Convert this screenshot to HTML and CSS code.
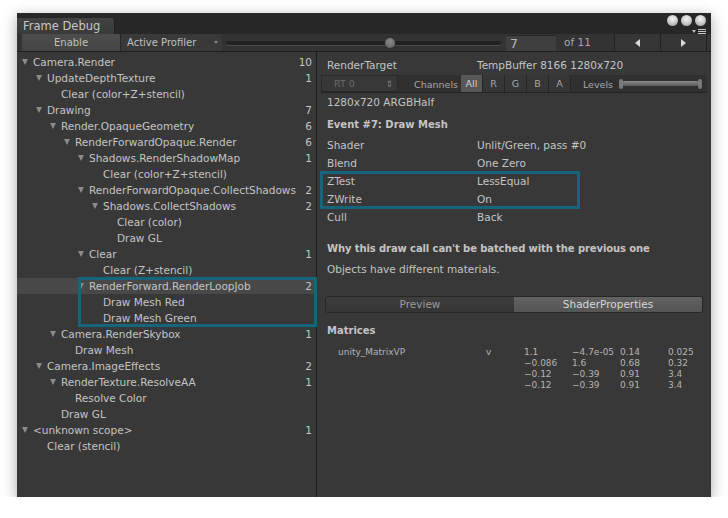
FILE: index.html
```html
<!DOCTYPE html>
<html>
<head>
<meta charset="utf-8">
<link rel="stylesheet" href="styles.css">
</head>
<body>
<div class="window">
  <div class="tabbar">
    <div class="tab">Frame Debug</div>
    <div class="winctrl">
      <div class="dots"><span class="dot"></span><span class="dot"></span><span class="dot"></span></div>
      <div class="menuicon"><span class="mtri"></span><span class="mlines"></span></div>
    </div>
  </div>
  <div class="toolbar">
    <div class="tbtn enable">Enable</div>
    <div class="tbtn profiler">Active Profiler<span class="caret"></span></div>
    <div class="tslider"><div class="track"><span class="thumb"></span></div></div>
    <div class="field">7</div>
    <div class="ofcount">of 11</div>
    <div class="navbtn"><span class="tri-left"></span></div>
    <div class="navbtn"><span class="tri-right"></span></div>
    <div class="tbend"></div>
  </div>
  <div class="content">
    <div class="tree">
      <div class="row d0"><span class="arrow"></span><span class="name">Camera.Render</span><span class="count">10</span></div>
      <div class="row d1"><span class="arrow"></span><span class="name">UpdateDepthTexture</span><span class="count">1</span></div>
      <div class="row d2"><span class="noarrow"></span><span class="name">Clear (color+Z+stencil)</span></div>
      <div class="row d1"><span class="arrow"></span><span class="name">Drawing</span><span class="count">7</span></div>
      <div class="row d2"><span class="arrow"></span><span class="name">Render.OpaqueGeometry</span><span class="count">6</span></div>
      <div class="row d3"><span class="arrow"></span><span class="name">RenderForwardOpaque.Render</span><span class="count">6</span></div>
      <div class="row d4"><span class="arrow"></span><span class="name">Shadows.RenderShadowMap</span><span class="count">1</span></div>
      <div class="row d5"><span class="noarrow"></span><span class="name">Clear (color+Z+stencil)</span></div>
      <div class="row d4"><span class="arrow"></span><span class="name">RenderForwardOpaque.CollectShadows</span><span class="count">2</span></div>
      <div class="row d5"><span class="arrow"></span><span class="name">Shadows.CollectShadows</span><span class="count">2</span></div>
      <div class="row d6"><span class="noarrow"></span><span class="name">Clear (color)</span></div>
      <div class="row d6"><span class="noarrow"></span><span class="name">Draw GL</span></div>
      <div class="row d4"><span class="arrow"></span><span class="name">Clear</span><span class="count">1</span></div>
      <div class="row d5"><span class="noarrow"></span><span class="name">Clear (Z+stencil)</span></div>
      <div class="hlgroup">
        <div class="row d4 selected"><span class="arrow"></span><span class="name">RenderForward.RenderLoopJob</span><span class="count">2</span></div>
        <div class="row d5"><span class="noarrow"></span><span class="name">Draw Mesh Red</span></div>
        <div class="row d5"><span class="noarrow"></span><span class="name">Draw Mesh Green</span></div>
      </div>
      <div class="row d2"><span class="arrow"></span><span class="name">Camera.RenderSkybox</span><span class="count">1</span></div>
      <div class="row d3"><span class="noarrow"></span><span class="name">Draw Mesh</span></div>
      <div class="row d1"><span class="arrow"></span><span class="name">Camera.ImageEffects</span><span class="count">2</span></div>
      <div class="row d2"><span class="arrow"></span><span class="name">RenderTexture.ResolveAA</span><span class="count">1</span></div>
      <div class="row d3"><span class="noarrow"></span><span class="name">Resolve Color</span></div>
      <div class="row d2"><span class="noarrow"></span><span class="name">Draw GL</span></div>
      <div class="row d0"><span class="arrow"></span><span class="name">&lt;unknown scope&gt;</span><span class="count">1</span></div>
      <div class="row d1"><span class="noarrow"></span><span class="name">Clear (stencil)</span></div>
    </div>
    <div class="detail">
      <div class="rtrow"><span class="lbl">RenderTarget</span><span>TempBuffer 8166 1280x720</span></div>
      <div class="chanbar">
        <div class="rtsel"><span>RT 0</span><span class="updown">&#8661;</span></div>
        <div class="chlabel">Channels</div>
        <div class="chbtn on">All</div>
        <div class="chbtn">R</div>
        <div class="chbtn">G</div>
        <div class="chbtn">B</div>
        <div class="chbtn">A</div>
        <div class="levels">Levels</div>
        <div class="lvslider"><span class="cap"></span><span class="lvtrack"></span><span class="cap"></span></div>
      </div>
      <div class="fmt">1280x720 ARGBHalf</div>
      <div class="event">Event #7: Draw Mesh</div>
      <div class="props">
        <div class="prop"><span class="lbl">Shader</span><span>Unlit/Green, pass #0</span></div>
        <div class="prop"><span class="lbl">Blend</span><span>One Zero</span></div>
        <div class="zgroup">
          <div class="prop"><span class="lbl">ZTest</span><span>LessEqual</span></div>
          <div class="prop"><span class="lbl">ZWrite</span><span>On</span></div>
        </div>
        <div class="prop"><span class="lbl">Cull</span><span>Back</span></div>
      </div>
      <div class="why">Why this draw call can't be batched with the previous one</div>
      <div class="reason">Objects have different materials.</div>
      <div class="tabs">
        <div class="tabbtn">Preview</div>
        <div class="tabbtn active">ShaderProperties</div>
      </div>
      <div class="matrices">Matrices</div>
      <div class="mgrid">
        <span>unity_MatrixVP</span><span>v</span><span>1.1</span><span>&#8722;4.7e-05</span><span>0.14</span><span>0.025</span>
        <span></span><span></span><span>&#8722;0.086</span><span>1.6</span><span>0.68</span><span>0.32</span>
        <span></span><span></span><span>&#8722;0.12</span><span>&#8722;0.39</span><span>0.91</span><span>3.4</span>
        <span></span><span></span><span>&#8722;0.12</span><span>&#8722;0.39</span><span>0.91</span><span>3.4</span>
      </div>
    </div>
  </div>
</div>
</body>
</html>
```
FILE: styles.css
```css
* { box-sizing: border-box; }
html, body { margin: 0; padding: 0; background: #ffffff; }
body {
  font-family: "DejaVu Sans", "Liberation Sans", sans-serif;
  font-size: 10.5px;
  color: #c4c4c4;
}
.window {
  margin: 13px 0 0 17px;
  width: 694px;
  height: 484px;
  background: #383838;
  display: flex;
  flex-direction: column;
  box-shadow: 0 4px 14px rgba(0,0,0,0.35);
}
.tabbar {
  height: 21px;
  flex: 0 0 21px;
  background: #272727;
  display: flex;
  align-items: flex-end;
  justify-content: space-between;
}
.tab {
  width: 98px;
  height: 16px;
  background: linear-gradient(#424242, #3a3a3a);
  border-radius: 0 3px 0 0;
  border-right: 1px solid #1f1f1f;
  font-size: 11.5px;
  line-height: 17px;
  padding-left: 6px;
  color: #c8c8c8;
}
.winctrl {
  align-self: stretch;
  display: flex;
  flex-direction: column;
  align-items: flex-end;
  padding: 2px 5px 0 0;
}
.dots { display: flex; gap: 3px; }
.dot {
  width: 11px; height: 11px; border-radius: 50%;
  background: radial-gradient(circle at 50% 35%, #f4f4f4 0%, #d0d0d0 45%, #8e8e8e 100%);
}
.menuicon { display: flex; align-items: center; gap: 2px; margin-top: 2px; height: 6px; }
.mtri { width: 0; height: 0; border-left: 2px solid transparent; border-right: 2px solid transparent; border-top: 3px solid #bdbdbd; }
.mlines {
  width: 8px; height: 5px;
  background: linear-gradient(#c8c8c8 0 1px, transparent 1px 2px, #c8c8c8 2px 3px, transparent 3px 4px, #c8c8c8 4px 5px);
}
.toolbar {
  height: 18px;
  flex: 0 0 18px;
  background: #333333;
  border-bottom: 1px solid #1e1e1e;
  display: flex;
  align-items: stretch;
  padding-left: 5px;
  font-size: 10px;
}
.tbtn { line-height: 17px; color: #c0c0c0; }
.enable {
  flex: 0 0 99px;
  background: linear-gradient(#4d4d4d, #444444);
  text-align: center;
  border-right: 1px solid #262626;
}
.profiler {
  flex: 0 0 101px;
  background: #393939;
  padding-left: 6px;
  display: flex;
  justify-content: space-between;
  align-items: center;
  padding-right: 4px;
}
.caret { width: 0; height: 0; border-left: 2px solid transparent; border-right: 2px solid transparent; border-top: 3px solid #888; }
.tslider { flex: 1; display: flex; align-items: center; padding: 0 5px 0 4px; }
.track {
  flex: 1; height: 4px; border-radius: 2px;
  background: #222;
  box-shadow: 0 1px 0 #4a4a4a;
  position: relative;
}
.thumb {
  position: absolute; left: 159px; top: -3px;
  width: 10px; height: 10px; border-radius: 50%;
  background: radial-gradient(circle at 50% 35%, #8a8a8a, #5e5e5e);
}
.field {
  flex: 0 0 50px;
  margin: 1px 0 0 0;
  background: #3f3f3f;
  border-top: 1px solid #262626;
  font-size: 12.5px;
  line-height: 15px;
  padding-left: 4px;
  color: #b8b8b8;
}
.ofcount { flex: 0 0 58px; padding-left: 8px; line-height: 17px; font-size: 10.5px; color: #a8a8a8; }
.navbtn {
  flex: 0 0 46px;
  border-left: 1px solid #232323;
  background: #363636;
  display: flex; align-items: center; justify-content: center;
}
.tri-left { width: 0; height: 0; border-top: 4px solid transparent; border-bottom: 4px solid transparent; border-right: 5px solid #d8d8d8; }
.tri-right { width: 0; height: 0; border-top: 4px solid transparent; border-bottom: 4px solid transparent; border-left: 5px solid #d8d8d8; }
.tbend { flex: 0 0 5px; border-left: 1px solid #232323; }
.content { flex: 1; display: flex; min-height: 0; }
.tree {
  flex: 0 0 300px;
  border-right: 1px solid #1c1c1c;
  padding-top: 2px;
  background: #383838;
}
.row {
  height: 16px;
  display: flex;
  align-items: center;
  padding-right: 4px;
  color: #c4c4c4;
  white-space: nowrap;
}
.row.selected { background: #484848; }
.d0 { padding-left: 5px; }
.d1 { padding-left: 19px; }
.d2 { padding-left: 33px; }
.d3 { padding-left: 47px; }
.d4 { padding-left: 61px; }
.d5 { padding-left: 75px; }
.d6 { padding-left: 89px; }
.arrow, .noarrow { flex: 0 0 11px; height: 16px; display: flex; align-items: center; }
.arrow::before {
  content: "";
  width: 0; height: 0;
  border-left: 3.5px solid transparent;
  border-right: 3.5px solid transparent;
  border-top: 6px solid #8a8a8a;
}
.name { flex: 1; }
.count { text-align: right; }
.hlgroup { position: relative; }
.hlgroup::after {
  content: "";
  position: absolute;
  left: 61px; right: -1px; top: -1px; bottom: -1px;
  border: 3px solid #15667d;
  pointer-events: none;
}
.detail { flex: 1; min-width: 0; padding-top: 4px; }
.rtrow, .prop { display: flex; height: 18px; align-items: center; padding-left: 10px; }
.lbl { width: 150px; flex: 0 0 150px; }
.chanbar {
  margin: 1px 4px 0 4px;
  height: 18px;
  background: #303030;
  border-bottom: 1px solid #242424;
  display: flex;
  align-items: stretch;
  font-size: 9.5px;
  color: #a8a8a8;
}
.rtsel {
  flex: 0 0 77px;
  background: #383838;
  border: 1px solid #2a2a2a;
  display: flex; justify-content: space-between; align-items: center;
  padding: 0 4px 0 12px;
  color: #6a6a6a;
}
.updown { font-size: 9px; color: #7a7a7a; }
.chlabel { flex: 0 0 63px; text-align: right; padding-right: 3px; line-height: 19px; }
.chbtn {
  flex: 0 0 22px;
  text-align: center;
  line-height: 18px;
  border-right: 1px solid #262626;
  background: #363636;
}
.chbtn.on { background: #575757; color: #d0d0d0; }
.levels { flex: 0 0 48px; text-align: right; padding-right: 6px; line-height: 19px; }
.lvslider { flex: 1; display: flex; align-items: center; padding-right: 5px; }
.cap { width: 4px; height: 10px; border-radius: 2px; background: #7a7a7a; }
.lvtrack { flex: 1; height: 5px; background: linear-gradient(#8a8a8a, #5a5a5a); border-radius: 1px; }
.fmt { height: 16px; line-height: 16px; padding-left: 10px; margin-top: 1px; }
.event { font-weight: bold; height: 16px; line-height: 16px; padding-left: 10px; margin-top: 7px; font-size: 10px; }
.props { margin-top: 3px; }
.zgroup { position: relative; }
.zgroup::after {
  content: "";
  position: absolute;
  left: 3px; width: 254px; top: -1px; bottom: -1px;
  border: 3px solid #15667d;
  pointer-events: none;
}
.why { font-weight: bold; font-size: 10px; height: 16px; line-height: 16px; padding-left: 10px; margin-top: 15px; letter-spacing: -0.1px; }
.reason { height: 16px; line-height: 16px; padding-left: 10px; margin-top: 4px; }
.tabs {
  margin: 19px 8px 0 8px;
  height: 17px;
  display: flex;
  border: 1px solid #262626;
  border-radius: 3px;
  overflow: hidden;
}
.tabbtn {
  flex: 1;
  text-align: center;
  line-height: 15px;
  background: linear-gradient(#3e3e3e, #343434);
  color: #9a9a9a;
}
.tabbtn.active { background: linear-gradient(#626262, #555555); color: #d8d8d8; }
.matrices { font-weight: bold; font-size: 10px; height: 16px; line-height: 16px; padding-left: 10px; margin-top: 10px; }
.mgrid {
  margin-top: 8px;
  padding-left: 21px;
  display: grid;
  grid-template-columns: 148px 38px 48px 48px 48px 48px;
  grid-auto-rows: 11px;
  font-size: 9px;
  line-height: 11px;
  color: #b4b4b4;
}
```
